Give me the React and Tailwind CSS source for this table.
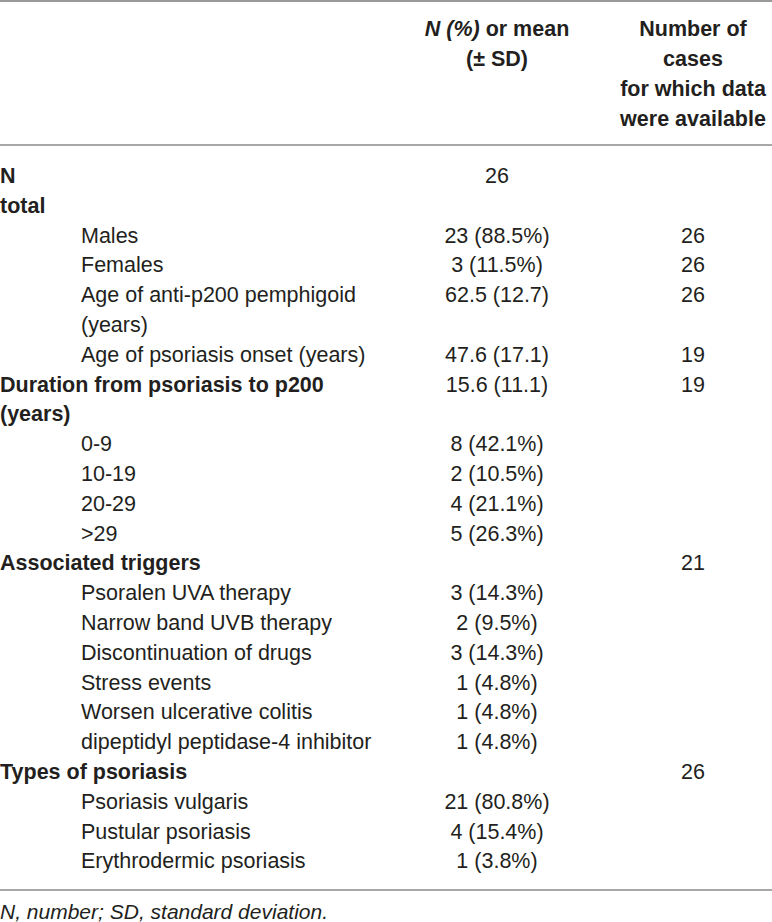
const rows = [
  { label: <>N<br />total</>, bold: true, mid: "26", right: "" },
  { label: "Males", mid: "23 (88.5%)", right: "26", sub: true },
  { label: "Females", mid: "3 (11.5%)", right: "26", sub: true },
  { label: "Age of anti-p200 pemphigoid (years)", mid: "62.5 (12.7)", right: "26", sub: true },
  { label: "Age of psoriasis onset (years)", mid: "47.6 (17.1)", right: "19", sub: true },
  { label: "Duration from psoriasis to p200 (years)", bold: true, mid: "15.6 (11.1)", right: "19" },
  { label: "0-9", mid: "8 (42.1%)", right: "", sub: true },
  { label: "10-19", mid: "2 (10.5%)", right: "", sub: true },
  { label: "20-29", mid: "4 (21.1%)", right: "", sub: true },
  { label: ">29", mid: "5 (26.3%)", right: "", sub: true },
  { label: "Associated triggers", bold: true, mid: "", right: "21" },
  { label: "Psoralen UVA therapy", mid: "3 (14.3%)", right: "", sub: true },
  { label: "Narrow band UVB therapy", mid: "2 (9.5%)", right: "", sub: true },
  { label: "Discontinuation of drugs", mid: "3 (14.3%)", right: "", sub: true },
  { label: "Stress events", mid: "1 (4.8%)", right: "", sub: true },
  { label: "Worsen ulcerative colitis", mid: "1 (4.8%)", right: "", sub: true },
  { label: "dipeptidyl peptidase-4 inhibitor", mid: "1 (4.8%)", right: "", sub: true },
  { label: "Types of psoriasis", bold: true, mid: "", right: "26" },
  { label: "Psoriasis vulgaris", mid: "21 (80.8%)", right: "", sub: true },
  { label: "Pustular psoriasis", mid: "4 (15.4%)", right: "", sub: true },
  { label: "Erythrodermic psoriasis", mid: "1 (3.8%)", right: "", sub: true },
];

export default function App() {
  return (
    <div className="w-[772px] bg-white text-[#231f20] text-[21.5px] leading-[29.8px] font-['Liberation_Sans',Arial,sans-serif]">
      <div className="border-t-2 border-[#9a9a9a]">
        <div className="grid grid-cols-[388px_218px_166px] pt-[12px] pb-[10px] font-bold leading-[30px]">
          <div></div>
          <div className="text-center">
            <span className="italic">N (%)</span> or mean
            <br />
            (± SD)
          </div>
          <div className="text-center pl-2">
            Number of
            <br />
            cases
            <br />
            for which data
            <br />
            were available
          </div>
        </div>
      </div>

      <div className="border-t-2 border-[#a8a8a8] pt-[16px] pb-[12px]">
        {rows.map((r, i) => (
          <div key={i} className="grid grid-cols-[388px_218px_166px]">
            <div className={(r.bold ? "font-bold " : "") + (r.sub ? "pl-[81px]" : "")}>
              {r.label}
            </div>
            <div className="text-center">{r.mid}</div>
            <div className="text-center pl-2">{r.right}</div>
          </div>
        ))}
      </div>

      <div className="border-t-2 border-[#a8a8a8] pt-[9px] pb-[6px] italic text-[21px] leading-[24px]">
        N, number; SD, standard deviation.
      </div>
    </div>
  );
}
